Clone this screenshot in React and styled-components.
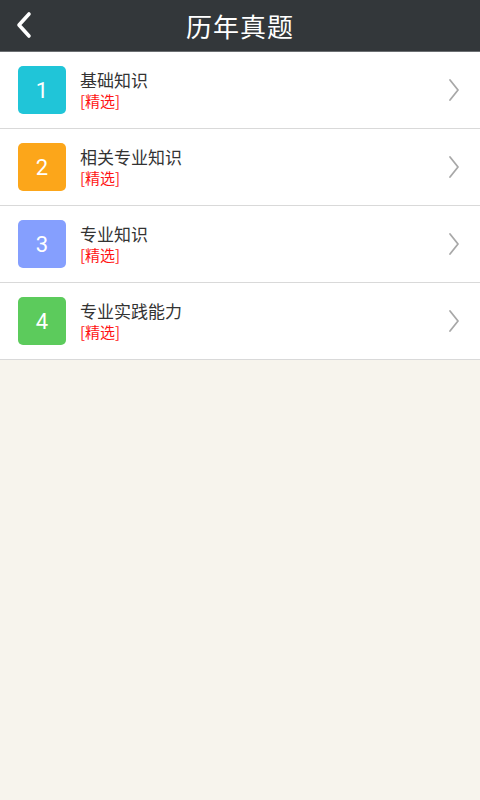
import React from "react";
import styled, { createGlobalStyle } from "styled-components";

const Global = createGlobalStyle`
  html, body { margin: 0; padding: 0; background: #f7f4ed; }
  body { font-family: "Noto Sans CJK SC", "Noto Sans", sans-serif; }
`;

const Page = styled.div`
  width: 480px;
  min-height: 800px;
  background: #f7f4ed;
`;

const Header = styled.div`
  height: 51px;
  background: #33373a;
  border-bottom: 1px solid #6b6f72;
  display: flex;
  align-items: center;
  justify-content: center;
  position: relative;
`;

const Title = styled.div`
  color: #ffffff;
  font-size: 26px;
  letter-spacing: 1px;
  line-height: 1;
`;

const Back = styled.div`
  position: absolute;
  left: 14px;
  top: 11px;
  width: 20px;
  height: 28px;
`;

const List = styled.div`
  background: #ffffff;
`;

const Row = styled.div`
  height: 76px;
  display: flex;
  align-items: center;
  padding: 0 20px 0 18px;
  border-bottom: 1px solid #d9d9d9;
  background: #fff;
`;

const Badge = styled.div`
  width: 48px;
  height: 48px;
  border-radius: 5px;
  background: ${(p) => p.$color};
  color: #fff;
  font-family: "Roboto", "Noto Sans", sans-serif;
  font-size: 22px;
  display: flex;
  align-items: center;
  justify-content: center;
`;

const Texts = styled.div`
  flex: 1;
  margin-left: 14px;
  display: flex;
  flex-direction: column;
  gap: 1px;
`;

const Name = styled.div`
  color: #333;
  font-size: 17px;
  line-height: 20px;
  height: 20px;
`;

const Tag = styled.div`
  color: #ff1414;
  font-size: 15px;
  line-height: 19px;
  height: 19px;
`;

const items = [
  { n: "1", name: "基础知识", color: "#20c5d8" },
  { n: "2", name: "相关专业知识", color: "#fca61a" },
  { n: "3", name: "专业知识", color: "#859ffe" },
  { n: "4", name: "专业实践能力", color: "#5ccb5c" },
];

export default function App() {
  return (
    <Page>
      <Global />
      <Header>
        <Back>
          <svg width="20" height="28" viewBox="0 0 20 28">
            <path d="M15 3 L5 14 L15 25" fill="none" stroke="#fff" strokeWidth="3.6" strokeLinecap="round" strokeLinejoin="round" />
          </svg>
        </Back>
        <Title>历年真题</Title>
      </Header>
      <List>
        {items.map((it) => (
          <Row key={it.n}>
            <Badge $color={it.color}>{it.n}</Badge>
            <Texts>
              <Name>{it.name}</Name>
              <Tag>[精选]</Tag>
            </Texts>
            <svg width="12" height="24" viewBox="0 0 12 24">
              <path d="M2 2 L10 12 L2 22" fill="none" stroke="#a8a8a8" strokeWidth="1.8" strokeLinecap="round" strokeLinejoin="round" />
            </svg>
          </Row>
        ))}
      </List>
    </Page>
  );
}
